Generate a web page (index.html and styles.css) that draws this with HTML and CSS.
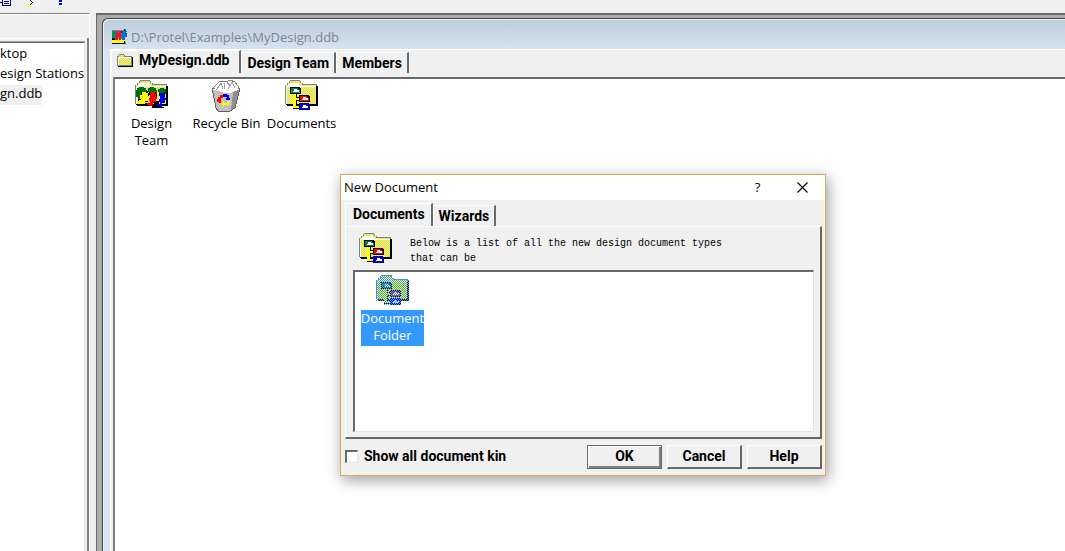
FILE: index.html
```html
<!DOCTYPE html>
<html lang="en">
<head>
    <meta charset="UTF-8">
    <meta name="viewport" content="width=device-width, initial-scale=1.0">
    <title>Protel - MyDesign.ddb</title>
    <link rel="stylesheet" href="styles.css">
</head>
<body>
    <!-- Shared icon shapes -->
    <svg class="defs" width="0" height="0" aria-hidden="true">
        <defs>
            <pattern id="dither" width="2" height="2" patternUnits="userSpaceOnUse">
                <rect width="2" height="2" fill="#d0d0d0"/>
                <rect width="1" height="1" fill="#ffff00"/>
                <rect x="1" y="1" width="1" height="1" fill="#ffff00"/>
            </pattern>
            <pattern id="dither-small" width="2" height="2" patternUnits="userSpaceOnUse">
                <rect width="2" height="2" fill="#ffff00"/>
                <rect width="1" height="1" fill="#d0d0d0"/>
                <rect x="1" y="1" width="1" height="1" fill="#d0d0d0"/>
            </pattern>
            <pattern id="select" width="2" height="2" patternUnits="userSpaceOnUse">
                <rect x="1" width="1" height="1" fill="#3399ff"/>
                <rect y="1" width="1" height="1" fill="#3399ff"/>
            </pattern>
            <symbol id="folder" viewBox="0 0 33 32">
                <path d="M2 24h30V6h1v20H2z" fill="#000"/>
                <path d="M0 5h2V3h2V1h1V0h10v1h1v2h2v1h14v21H1v-1H0z" fill="#808080"/>
                <path d="M1 5h2V3h2V1h10v2h2v2h14v19H1z" fill="url(#dither)"/>
                <path d="M1 6h2V4h2V3h9v2h2v1h15v1H2v17H1z" fill="#fff"/>
                <path d="M31 6h1v19H1v-1h30z" fill="#000"/>
            </symbol>
            <symbol id="tree-folder" viewBox="0 0 33 32">
                <use href="#folder" width="33" height="32"/>
                <path d="M8 13h4v4h3v4h-3v4h3v4H8z" fill="#000"/>
                <path d="M8 13h3v5h4v2h-4v6h4v2H8z" fill="#ffff00"/>
                <path d="M5 7h9l2 2v5H5z" fill="#000"/>
                <path d="M6 8h7v1h1v1h1v3H6z" fill="#008040"/>
                <path d="M9 9h3v1h2v2H8v-1h1z" fill="#fff"/>
                <path d="M14 15h9l2 2v5H14z" fill="#000"/>
                <path d="M15 16h7v1h1v1h1v3h-9z" fill="#ff0000"/>
                <path d="M18 17h3v1h2v2h-6v-1h1z" fill="#fff"/>
                <path d="M14 23h9l2 2v5H14z" fill="#000080"/>
                <path d="M15 24h7v1h1v1h1v3h-9z" fill="#0000ff"/>
                <path d="M18 25h3v1h2v2h-6v-1h1z" fill="#fff"/>
            </symbol>
        </defs>
    </svg>

    <div class="toolbar">
        <svg class="toolbar-icons" width="66" height="8" viewBox="0 0 66 8" shape-rendering="crispEdges" aria-hidden="true">
            <path d="M0 2h2v1H0zM2 0h1v5h7V0h1v6H2zM4 1h5v1H4zM4 3h5v1H4z" fill="#000080"/>
            <path d="M27 4h1v1h-1zM29 4h1v1h-1zM26 7h1v1h-1zM28 6h1v1h-1zM30 6h1v1h-1zM27 6h1v-1h1v1h-1v1h-1z" fill="#ffff00"/>
            <path d="M30 0h1v1h1v1h1v1h-1v1h-1v1h-1V4h1V3h1V2h-1V1h-1z" fill="#000"/>
            <path d="M59 0h3v2h-3zM59 3h3v2h-3z" fill="#0000ff"/>
        </svg>
    </div>

    <div class="workspace">
        <div class="explorer">
            <ul class="tree">
                <li>ktop</li>
                <li>esign Stations</li>
                <li><span class="tree-current">gn.ddb</span></li>
            </ul>
        </div>

        <div class="mdi-area">
            <div class="mdi-window">
                <div class="mdi-title">
                    <svg width="17" height="16" viewBox="0 0 17 16" shape-rendering="crispEdges" aria-hidden="true">
                        <path d="M1 1h12v12h2v2H1z" fill="#808080"/>
                        <path d="M1 2h6v8H1z" fill="#009060"/>
                        <path d="M1 10h13v4H1z" fill="#ffff00"/>
                        <path d="M1 9h2v1h2v1h3v-1h2v1h3v1h1v3H1v-1h12v-1h-2v-1H9v-1H7v1H5v-1H1z" fill="#000"/>
                        <path d="M1 11h12v3H1z" fill="#ffff00"/>
                        <path d="M5 2h2v2h1V2h2v9H8V8H7v3H4V8h1z" fill="#f01030"/>
                        <path d="M11 2h3V0h1v2h1v1h-1v2h1v3h-2v3h-3V8h-1V6h1z" fill="#0070d0"/>
                        <path d="M10 2h1v2h-1zM13 0h1v2h-1zM15 4h1v1h-1z" fill="#202060"/>
                    </svg>
                    <span>D:\Protel\Examples\MyDesign.ddb</span>
                </div>
                <div class="mdi-body">
                    <div class="tabs">
                        <button class="tab active" type="button">
                            <svg width="16" height="13" viewBox="0 0 16 13" shape-rendering="crispEdges" aria-hidden="true">
                                <path d="M1 12h14V3h1v10H1z" fill="#000"/>
                                <path d="M0 2h1V1h1V0h5v1h1v1h7v10H0z" fill="#808080"/>
                                <path d="M1 3h1V1h5v2h7v8H1z" fill="url(#dither-small)"/>
                                <path d="M1 3h13v1H2v7H1z" fill="#fff"/>
                            </svg>
                            MyDesign.ddb
                        </button>
                        <button class="tab" type="button">Design Team</button>
                        <button class="tab" type="button">Members</button>
                    </div>
                    <div class="file-pane">
                        <div class="file">
                            <svg width="33" height="32" viewBox="0 0 33 32" shape-rendering="crispEdges" aria-hidden="true">
                                <use href="#folder" width="33" height="32"/>
                                <path d="M1 10h1V8h2V7h5v1h2v2h1v5H8v3H5v2H3v-3H1z" fill="#007000"/>
                                <path d="M13 8h2V7h4v1h2v2h1v4h-5l-4-2z" fill="#007000"/>
                                <path d="M23 9h2V8h4v1h2v5h-5l-3-2z" fill="#007000"/>
                                <path d="M3 19h3v4h8v1h5v-3h5v6h5v1H17v-2h-2v-2H6v-2H4z" fill="#000"/>
                                <path d="M7 12h4v1h2v3h1v2h-1v3h-3v3H5v-2H4v-2h2v-2H5v-3h2z" fill="#ffff00"/>
                                <path d="M15 12h5v2h1v3h1v2h-1v3h-3v4h-4v-1h-2v-2h3v-2h-1v-3h1z" fill="#ff0000"/>
                                <path d="M25 13h4v2h1v3h1v2h-1v3h-3v4h-3v-1h-2v-2h3v-2h-1v-3h1z" fill="#0000ff"/>
                                <path d="M6 12h1v3H6zM11 11h2v2h-2zM13 13h1v3h-1zM14 12h1v3h-1zM20 12h1v2h-1zM21 14h1v3h-1zM24 13h1v3h-1zM29 12h1v3h-1zM18 22h3v1h-3zM10 21h3v1h-3z" fill="#000"/>
                            </svg>
                            <span>Design<br>Team</span>
                        </div>
                        <div class="file">
                            <svg width="33" height="32" viewBox="0 0 33 32" shape-rendering="crispEdges" aria-hidden="true">
                                <path d="M3 8l4-4 3-3h4l2 1 4-2 5 2 3 4 1 3-5 4-13-1z" fill="#fff" stroke="#808080"/>
                                <path d="M7 9l4-6 2 6M15 3l-1 6M18 9l4-7 3 6M17 2l3 4" fill="none" stroke="#a0a0a0"/>
                                <path d="M2 9l12 3h8l8-4-5 20-5 3H8l-2-3z" fill="#c0c0c0"/>
                                <path d="M23 12l7-4-5 20-4 3z" fill="#909090"/>
                                <path d="M2 8l4 20 2 3h12l5-3 5-20" fill="none" stroke="#606060"/>
                                <path d="M3 9l10 3h9l7-3" fill="none" stroke="#fff"/>
                                <path d="M8 17h2v-2h3v3h-2v5H9v-1H7v-3h1z" fill="#f00"/>
                                <path d="M13 14h4v1h2v3h1v2h-4v-2h1v-1h-4z" fill="#00f"/>
                                <path d="M11 23h2v-2h1v2h3v-2h3v2h-1v2h-5v2h-1v-2h-2z" fill="#ff0"/>
                            </svg>
                            <span>Recycle Bin</span>
                        </div>
                        <div class="file">
                            <svg width="33" height="32" shape-rendering="crispEdges" aria-hidden="true"><use href="#tree-folder"/></svg>
                            <span>Documents</span>
                        </div>
                    </div>
                </div>
            </div>
        </div>
    </div>

    <div class="dialog" role="dialog" aria-labelledby="dialog-title">
        <div class="dialog-title">
            <span id="dialog-title">New Document</span>
            <button class="title-button" type="button" aria-label="Help">?</button>
            <button class="title-button" type="button" aria-label="Close">
                <svg width="11" height="11" viewBox="0 0 11 11" aria-hidden="true">
                    <path d="M0.5 0.5l10 10M10.5 0.5l-10 10" stroke="#000" stroke-width="1.2"/>
                </svg>
            </button>
        </div>
        <div class="dialog-body">
            <div class="tabs">
                <button class="tab active" type="button">Documents</button>
                <button class="tab" type="button">Wizards</button>
            </div>
            <div class="tab-page">
                <div class="intro">
                    <svg width="33" height="32" shape-rendering="crispEdges" aria-hidden="true"><use href="#tree-folder"/></svg>
                    <p>Below is a list of all the new design document types that can be</p>
                </div>
                <div class="doc-list">
                    <div class="file selected">
                        <svg width="33" height="32" viewBox="0 0 33 32" shape-rendering="crispEdges" aria-hidden="true">
                            <use href="#tree-folder" width="33" height="32"/>
                            <path d="M0 5h2V3h2V0h12v3h2v1h15v22h-8v4H8v-4H0z" fill="url(#select)"/>
                        </svg>
                        <span>Document<br>Folder</span>
                    </div>
                </div>
            </div>
            <div class="dialog-footer">
                <label class="check"><input type="checkbox"><span>Show all document kin</span></label>
                <button class="button default" type="button">OK</button>
                <button class="button" type="button">Cancel</button>
                <button class="button" type="button">Help</button>
            </div>
        </div>
    </div>
</body>
</html>
```

FILE: styles.css
```css
* {
    box-sizing: border-box;
}

body {
    margin: 0;
    height: 100vh;
    display: flex;
    flex-direction: column;
    overflow: hidden;
    background-color: #f0f0f0;
    color: #000;
    font-family: "Open Sans", "Noto Sans", sans-serif;
    font-size: 13px;
    line-height: 17px;
}

svg {
    display: block;
    flex: none;
}

.defs {
    position: absolute;
}

.toolbar {
    height: 13px;
    flex: none;
}

.workspace {
    flex: 1;
    display: flex;
    gap: 6px;
    min-height: 0;
}

/* Left explorer panel */
.explorer {
    width: 90px;
    padding: 28px 5px 0 0;
    border-top: 1px solid #808080;
    border-right: 1px solid #fff;
    box-shadow: inset 0 1px #fff;
    background: linear-gradient(#808080, #808080) right 0 top 24px / 2px 100% no-repeat,
        linear-gradient(#fff, #fff) 0 24px / 100% 1px no-repeat;
    display: flex;
}

.tree {
    flex: 1;
    margin: 0;
    padding: 2px 0 0;
    list-style: none;
    background-color: #fff;
    border-top: 1px solid #696969;
    border-right: 1px solid #e3e3e3;
    box-shadow: 0 -1px #a0a0a0;
    white-space: nowrap;
}

.tree li {
    height: 20px;
}

.tree-current {
    display: inline-block;
    height: 20px;
    background-color: #f0f0f0;
}

/* MDI window */
.mdi-area {
    flex: 1;
    padding: 3px 0 0 5px;
    background-color: #ababab;
    border-top: 2px solid #696969;
    border-left: 1px solid #696969;
    display: flex;
}

.mdi-window {
    flex: 1;
    display: flex;
    flex-direction: column;
    padding-left: 7px;
    border-top: 1px solid #404040;
    border-left: 1px solid #404040;
    border-radius: 6px 0 0 0;
    background: linear-gradient(#bdccdb, #d7e4f2 32px);
    box-shadow: inset 1px 1px #eef4fa;
}

.mdi-title {
    height: 30px;
    padding: 10px 0 0 1px;
    display: flex;
    gap: 3px;
    color: #7a8694;
}

.mdi-body {
    flex: 1;
    display: flex;
    flex-direction: column;
    padding-left: 2px;
    background-color: #f0f0f0;
    border-top: 1px solid #fff;
    border-left: 1px solid #fff;
}

.mdi-body .tabs {
    margin-left: -2px;
}

.tabs {
    display: flex;
    align-items: flex-end;
}

.tab {
    height: 21px;
    padding: 0 5px;
    display: flex;
    align-items: center;
    gap: 6px;
    border: 0;
    border-top: 1px solid #fff;
    border-left: 1px solid #fff;
    border-right: 2px solid #696969;
    background-color: #f0f0f0;
    color: #000;
    font: bold 14px/17px Roboto, Arial, sans-serif;
}

.tab.active {
    height: 23px;
    padding: 0 10px 4px 5px;
}

.file-pane {
    flex: 1;
    margin-top: 4px;
    padding-top: 1px;
    display: flex;
    background-color: #fff;
    border-top: 2px solid #696969;
    border-left: 2px solid #808080;
}

.file {
    width: 75px;
    padding-right: 2px;
    display: flex;
    flex-direction: column;
    align-items: center;
    gap: 3px;
    text-align: center;
    white-space: nowrap;
}

.file.selected span {
    padding: 0 0 2px;
    background-color: #3399ff;
    color: #fff;
}

/* New Document dialog */
.dialog {
    position: absolute;
    top: 174px;
    left: 340px;
    width: 486px;
    border: 1px solid #dca85c;
    background-color: #f0f0f0;
    box-shadow: 2px 4px 14px rgba(0, 0, 0, 0.4);
}

.dialog-title {
    height: 25px;
    padding-left: 3px;
    display: flex;
    align-items: center;
    background-color: #fff;
}

.dialog-title > span {
    flex: 1;
}

.title-button {
    width: 45px;
    height: 25px;
    padding: 0;
    display: flex;
    align-items: center;
    justify-content: center;
    border: 0;
    background: none;
    color: #000;
    font: 13px/17px "Open Sans", sans-serif;
}

.dialog-body {
    padding: 3px 3px 6px 4px;
}

.dialog .tab.active {
    padding: 0 6px 2px 7px;
}

.tab-page {
    padding: 6px 6px 5px 7px;
    border: 1px solid #fff;
    border-right: 2px solid #696969;
    border-bottom: 2px solid #696969;
}

.intro {
    height: 37px;
    padding-left: 6px;
    display: flex;
    gap: 18px;
}

.intro p {
    width: 320px;
    margin: 3px 0 0;
    font: 10px/15px "Liberation Mono", monospace;
}

.doc-list {
    height: 162px;
    padding: 3px 0 0 1px;
    background-color: #fff;
    border-top: 2px solid #696969;
    border-left: 2px solid #696969;
    border-right: 1px solid #e3e3e3;
    border-bottom: 1px solid #e3e3e3;
}

.dialog-footer {
    padding-top: 6px;
    display: flex;
    align-items: center;
    gap: 5px;
}

.check {
    flex: 1;
    display: flex;
    align-items: center;
    gap: 6px;
    padding-bottom: 2px;
    font: bold 14px/17px Roboto, Arial, sans-serif;
}

.check span {
    white-space: nowrap;
}

.check input {
    appearance: none;
    width: 13px;
    height: 13px;
    margin: 0;
    background-color: #fff;
    border: 2px solid #696969;
    border-right: 1px solid #e3e3e3;
    border-bottom: 1px solid #e3e3e3;
}

.button {
    width: 75px;
    height: 24px;
    padding: 0;
    border: 1px solid #fff;
    border-right: 2px solid #696969;
    border-bottom: 2px solid #696969;
    background-color: #f0f0f0;
    color: #000;
    font: bold 14px/17px Roboto, Arial, sans-serif;
}

.button.default {
    padding-bottom: 2px;
    border: 1px solid #696969;
    box-shadow: inset 1px 1px #fff, inset -2px -2px #808080;
}
```
